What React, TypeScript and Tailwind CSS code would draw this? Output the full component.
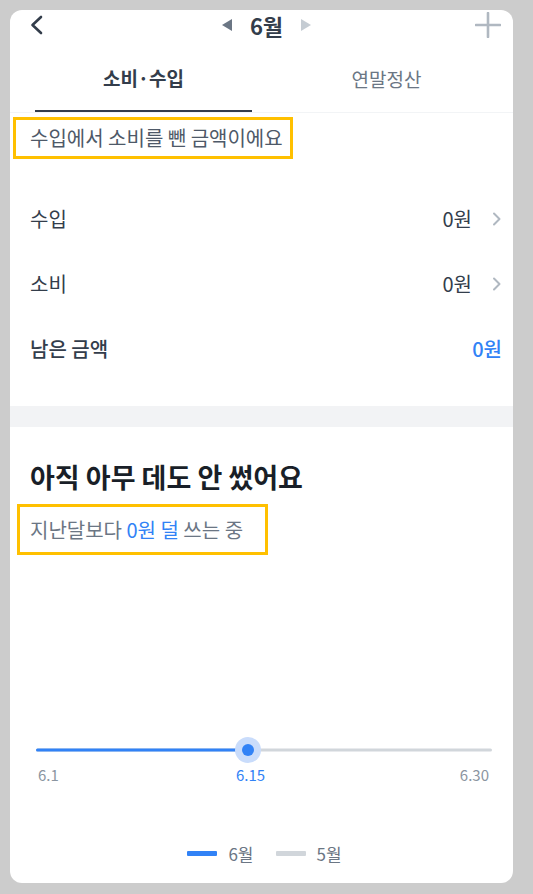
const font = { fontFamily: '"Noto Sans CJK KR", "Noto Sans", sans-serif' }

function Chevron() {
  return (
    <svg width="10" height="14" viewBox="0 0 10 14" className="ml-[20px]">
      <polyline points="2,1.5 7.5,7 2,12.5" fill="none" stroke="#b0b8c1" strokeWidth="2" strokeLinecap="round" strokeLinejoin="round" />
    </svg>
  )
}

function Row({ label, value, chevron, blue }: { label: string; value: string; chevron?: boolean; blue?: boolean }) {
  return (
    <div className="h-[65px] flex items-center justify-between pl-[20px] pr-[11px]">
      <span className={`text-[20px] text-[#333d4b] ${blue ? 'font-medium' : ''}`}>{label}</span>
      <div className="flex items-center">
        <span className={`text-[20px] ${blue ? 'text-[#3182f6] font-medium' : 'text-[#333d4b]'}`}>{value}</span>
        {chevron && <Chevron />}
      </div>
    </div>
  )
}

export default function App() {
  return (
    <div className="w-[533px] h-[894px] bg-[#cccccc] pt-[10px] px-[10px]" style={font}>
      <div className="w-[503px] h-[873px] bg-white rounded-[12px] overflow-hidden flex flex-col">
        {/* top bar */}
        <div className="h-[28px] grid grid-cols-3 items-center pl-[20px] pr-[12px]">
          <svg width="14" height="20" viewBox="0 0 14 20" className="mt-[2px]">
            <polyline points="11,2 2.5,10 11,18" fill="none" stroke="#333d4b" strokeWidth="2.6" strokeLinecap="round" strokeLinejoin="round" />
          </svg>
          <div className="flex items-center justify-center gap-[17px] mt-[2px] ml-[2px]">
            <svg width="12" height="14" viewBox="0 0 12 14">
              <polygon points="11,1 11,13 1,7" fill="#6b7684" />
            </svg>
            <span className="text-[22px] font-bold text-[#333d4b] leading-none">6월</span>
            <svg width="12" height="14" viewBox="0 0 12 14">
              <polygon points="1,1 1,13 11,7" fill="#c5ccd3" />
            </svg>
          </div>
          <div className="flex justify-end">
            <svg width="26" height="26" viewBox="0 0 26 26" className="mt-[2px]">
              <line x1="13" y1="1" x2="13" y2="25" stroke="#b0b8c1" strokeWidth="2.6" strokeLinecap="round" />
              <line x1="1" y1="13" x2="25" y2="13" stroke="#b0b8c1" strokeWidth="2.6" strokeLinecap="round" />
            </svg>
          </div>
        </div>

        {/* tabs */}
        <div className="flex pl-[25px] gap-[26px] border-b border-[#f2f4f6]">
          <button className="w-[217px] h-[74px] pt-[8px] flex items-center justify-center text-[19px] font-semibold text-[#333d4b] border-b-[2px] border-[#333d4b]">
            소비·수입
          </button>
          <button className="w-[217px] h-[74px] pt-[8px] flex items-center justify-center text-[19px] text-[#6b7684]">
            연말정산
          </button>
        </div>

        <div className="mt-[4px] ml-[3px] w-[280px] h-[42px] border-[3px] border-[#ffc000] flex items-center pl-[14px]">
          <span className="text-[20px] text-[#4e5968] leading-none whitespace-nowrap">수입에서 소비를 뺀 금액이에요</span>
        </div>

        <div className="mt-[27px]">
          <Row label="수입" value="0원" chevron />
          <Row label="소비" value="0원" chevron />
          <Row label="남은 금액" value="0원" blue />
        </div>

        <div className="mt-[25px] h-[21px] bg-[#f2f3f5]" />

        <div className="mt-[35px] pl-[20px]">
          <h2 className="text-[27px] font-bold text-[#191f28] leading-[30px] whitespace-nowrap">아직 아무 데도 안 썼어요</h2>
        </div>
        <div className="mt-[12px] ml-[7px] w-[251px] h-[51px] border-[3px] border-[#ffc000] flex items-center pl-[10px]">
          <span className="text-[20px] text-[#6b7684] leading-none whitespace-nowrap">
            지난달보다 <span className="text-[#3182f6]">0원 덜</span> 쓰는 중
          </span>
        </div>

        {/* chart */}
        <div className="mt-[181px] ml-[26px] w-[456px]">
          <svg width="456" height="28" viewBox="0 0 456 28">
            <line x1="1.5" y1="14" x2="454.5" y2="14" stroke="#d1d6db" strokeWidth="3" strokeLinecap="round" />
            <line x1="1.5" y1="14" x2="212" y2="14" stroke="#3182f6" strokeWidth="3" strokeLinecap="round" />
            <circle cx="212" cy="14" r="13" fill="#c9dcfb" />
            <circle cx="212" cy="14" r="6" fill="#3182f6" />
          </svg>
          <div className="flex items-center mt-[1px] text-[15px] text-[#8b95a1] leading-[20px]">
            <span className="w-[200px] pl-[2px]">6.1</span>
            <span className="text-[#3182f6]">6.15</span>
            <span className="ml-auto pr-[3px]">6.30</span>
          </div>
        </div>

        <div className="mt-[56px] flex items-center justify-center gap-[11px] text-[17px] text-[#6b7684] pl-[6px]">
          <span className="w-[30px] h-[5px] bg-[#3182f6] rounded-[1px]" />
          <span>6월</span>
          <span className="w-[30px] h-[5px] bg-[#d1d6db] rounded-[1px] ml-[11px]" />
          <span>5월</span>
        </div>
      </div>
    </div>
  )
}
